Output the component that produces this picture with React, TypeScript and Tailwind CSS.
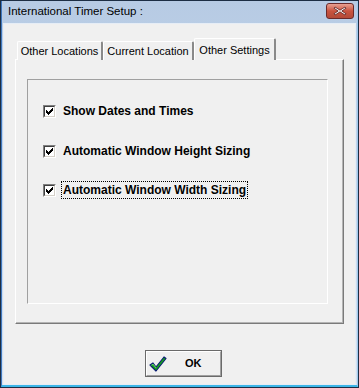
const ui = { fontFamily: '"Liberation Sans", Arial, sans-serif' };

function CheckBox() {
  return (
    <div className="w-[13px] h-[13px] shrink-0 border border-t-[#808080] border-l-[#808080] border-b-white border-r-white">
      <div className="w-full h-full bg-white border border-t-[#404040] border-l-[#404040] border-b-[#d4d0c8] border-r-[#d4d0c8] flex items-center justify-center">
        <svg width="7" height="7" viewBox="0 0 7 7">
          <path d="M0 2h1v1h1v1h1V3h1V2h1V1h1V0h1v3H6v1H5v1H4v1H3v1H2V6H1V5H0z" fill="#000" />
        </svg>
      </div>
    </div>
  );
}

function Option({ label, focused }: { label: string; focused?: boolean }) {
  return (
    <div className="flex items-center h-[18px] pl-[15px]">
      <CheckBox />
      <span
        className={
          "ml-[5px] px-px text-[12px] font-bold leading-[16px] text-black " +
          (focused ? "border border-dotted border-black" : "border border-transparent")
        }
      >
        {label}
      </span>
    </div>
  );
}

function Tab({ label, width }: { label: string; width: string }) {
  return (
    <div
      className={`${width} h-[19px] flex items-center justify-center text-[11px] text-black bg-[#f0f0f0] border-t border-l border-white border-r-2 border-r-[#8a8a8a] rounded-t-[2px]`}
    >
      {label}
    </div>
  );
}

export default function App() {
  return (
    <div className="w-[359px] h-[388px] flex flex-col bg-[#1d2e44] p-px" style={ui}>
      <div className="flex-1 flex flex-col bg-gradient-to-b from-[#b7cbe4] to-[#d3e0ef] border-r border-r-[#9ec9ee] border-b-[2px] border-b-[#3cb6e8] border-l border-l-[#3f78bf]">
        {/* title bar */}
        <div className="h-[22px] flex items-center justify-between pl-[6px] pr-[3px]">
          <span className="text-[11.5px] text-black leading-none">International Timer Setup :</span>
          <div className="w-[28px] h-[16px] mt-[-2px] rounded-[3px] border border-[#6b2a2a] bg-gradient-to-b from-[#e8a193] via-[#c9533f] to-[#b34a38] flex items-center justify-center">
            <svg width="14" height="10" viewBox="0 0 14 10">
              <path d="M2 1l5 3.2L12 1l1 1.2L8.8 5 13 7.8 12 9 7 5.8 2 9 1 7.8 5.2 5 1 2.2z" fill="#fff" stroke="#5a2020" strokeWidth="0.8" />
            </svg>
          </div>
        </div>

        {/* client area */}
        <div className="flex-1 mx-[1px] bg-[#f0f0f0] border border-[#e6edf6] relative">
          {/* watermark */}
          <div className="absolute left-[24px] top-[76px] text-[26px] font-bold tracking-[2px] text-[#dddddd] leading-none pointer-events-none">
            SOFTPEDIA<sup className="text-[7px] align-top">TM</sup>
          </div>
          <div className="absolute left-[45px] top-[104px] text-[10px] text-[#d2d2d2] leading-none pointer-events-none">
            www.softpedia.com
          </div>

          <div className="ml-[11px] mt-[14px] w-[329px]">
            {/* tabs */}
            <div className="flex items-end h-[22px] relative z-10 -mb-px">
              <div className="ml-[2px]">
                <Tab label="Other Locations" width="w-[86px]" />
              </div>
              <Tab label="Current Location" width="w-[91px]" />
              <div className="w-[82px] h-[22px] flex items-start justify-center pt-[3px] text-[11px] text-black bg-[#f0f0f0] border-t border-l border-white border-r-2 border-r-[#8a8a8a] rounded-t-[2px]">
                Other Settings
              </div>
            </div>

            {/* tab panel */}
            <div className="h-[265px] bg-[#f0f0f0] border-t border-l border-white border-r border-b border-r-[#7a7a7a] border-b-[#7a7a7a] shadow-[inset_-1px_-1px_0_#b4b4b4] relative">
              <div className="relative ml-[11px] mt-[19px] w-[301px] h-[225px] border border-t-[#a0a0a0] border-l-[#a0a0a0] border-b-white border-r-white pt-[22px] flex flex-col">
                <Option label="Show Dates and Times" />
                <div className="h-[22px]" />
                <Option label="Automatic Window Height Sizing" />
                <div className="h-[21px]" />
                <Option label="Automatic Window Width Sizing" focused />
              </div>
            </div>
          </div>

          {/* OK button */}
          <div className="ml-[141px] mt-[26px] w-[77px] h-[27px] border border-[#6a6a6a] bg-[#f0f0f0]">
            <div className="w-full h-full border border-t-white border-l-white border-b-[#a0a0a0] border-r-[#a0a0a0] flex items-center">
              <svg className="ml-[2px]" width="18" height="16" viewBox="0 0 18 16">
                <path d="M1 9l3-2 3 4L15 1l2 1.5L7 15z" fill="#18a818" stroke="#0b1f73" strokeWidth="1.2" strokeLinejoin="round" />
                <path d="M2.5 9.2l1.6-1 3 3.8" fill="none" stroke="#7ee07e" strokeWidth="0.8" />
              </svg>
              <span className="ml-[18px] text-[11px] font-bold text-black leading-none">OK</span>
            </div>
          </div>
        </div>
      </div>
    </div>
  );
}
